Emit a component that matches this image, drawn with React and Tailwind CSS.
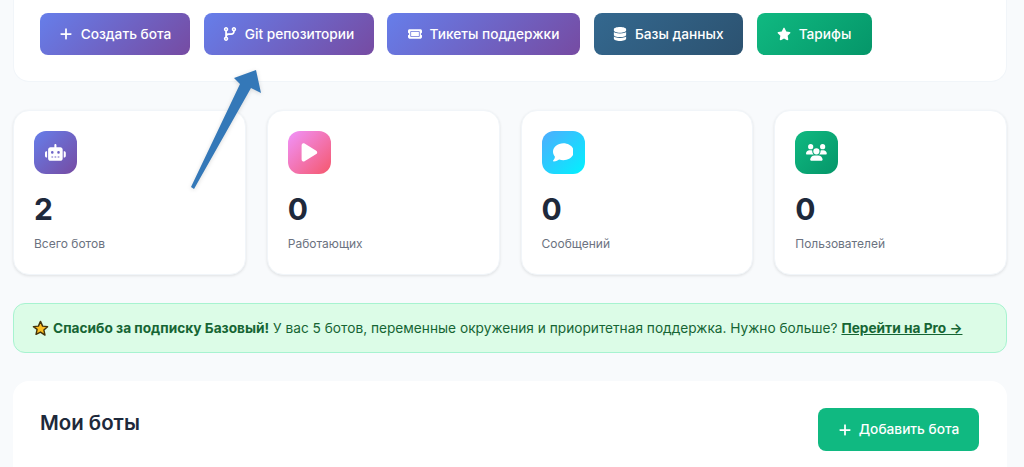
import { FaPlus, FaCodeBranch, FaTicket, FaDatabase, FaStar, FaRobot, FaPlay, FaComment, FaUsers } from "react-icons/fa6";

const purple = "bg-[linear-gradient(135deg,#667eea_0%,#764ba2_100%)]";
const green = "bg-[linear-gradient(135deg,#10b981_0%,#059669_100%)]";

const actions = [
  { label: "Создать бота", icon: FaPlus, bg: purple, w: "w-[150px]" },
  { label: "Git репозитории", icon: FaCodeBranch, bg: purple, w: "w-[170px]" },
  { label: "Тикеты поддержки", icon: FaTicket, bg: purple, w: "w-[193px]" },
  { label: "Базы данных", icon: FaDatabase, bg: "bg-[linear-gradient(135deg,#34688f_0%,#2c5270_100%)]", w: "w-[149.5px]" },
  { label: "Тарифы", icon: FaStar, bg: green, w: "w-[115px]" },
];

const stats = [
  { value: "2", label: "Всего ботов", icon: FaRobot, bg: purple },
  { value: "0", label: "Работающих", icon: FaPlay, bg: "bg-[linear-gradient(135deg,#f093fb_0%,#f5576c_100%)]" },
  { value: "0", label: "Сообщений", icon: FaComment, bg: "bg-[linear-gradient(135deg,#4facfe_0%,#00f2fe_100%)]" },
  { value: "0", label: "Пользователей", icon: FaUsers, bg: green },
];

export default function App() {
  return (
    <div className="relative h-[467px] overflow-hidden bg-[#f8fafc] pr-[17px] pl-[13px] font-['Inter',sans-serif]">
      <section className="rounded-b-2xl border border-t-0 border-[#f1f5f9] bg-white pt-[13px] pb-[26px] pl-[26px]">
        <div className="flex gap-[13.5px]">
          {actions.map((a) => (
            <button key={a.label} className={`flex h-[42px] items-center justify-center gap-[8px] rounded-lg text-[13.7px] font-medium text-white ${a.w} ${a.bg}`}>
              <a.icon className="h-[14px] w-auto" />
              {a.label}
            </button>
          ))}
        </div>
      </section>

      <section className="mt-[28px] grid grid-cols-4 gap-[21px]">
        {stats.map((s) => (
          <div key={s.label} className="h-[165px] rounded-2xl border border-[#f1f5f9] bg-white pt-[20px] pl-[20px] shadow-[0_1px_3px_rgba(0,0,0,0.1)]">
            <div className={`flex h-[43px] w-[43px] items-center justify-center rounded-xl text-white ${s.bg}`}>
              <s.icon className="h-[20.8px] w-auto" />
            </div>
            <div className="mt-[17px] text-[30px] leading-[36px] font-bold text-[#1e293b]">{s.value}</div>
            <div className="mt-[9px] text-xs leading-[16px] text-[#6b7280]">{s.label}</div>
          </div>
        ))}
      </section>

      <div className="mt-[28px] flex h-[50px] items-center gap-[4px] rounded-xl border border-[#a7f3d0] bg-[#dcfce7] pl-[18px] text-[13.7px] text-[#166534]">
        <svg width="17" height="17" viewBox="0 0 24 24">
          <path d="M12 2l3 6.6 7 .8-5.2 4.8 1.5 7.1L12 17l-6.3 3.3 1.5-7.1L2 9.4l7-.8z" fill="#fbbf24" stroke="#44330a" strokeWidth="2" strokeLinejoin="round" />
        </svg>
        <p>
          <strong className="font-bold">Спасибо за подписку Базовый!</strong> У вас 5 ботов, переменные окружения и приоритетная поддержка. Нужно больше?{" "}
          <a className="font-bold underline">Перейти на Pro →</a>
        </p>
      </div>

      <section className="mt-[28px] flex h-[120px] items-start justify-between rounded-t-2xl bg-white pt-[27px] pr-[28px] pl-[27px]">
        <h2 className="mt-[1px] text-[20.4px] leading-[28px] font-semibold text-[#1e293b]">Мои боты</h2>
        <button className="flex h-[43px] w-[161px] items-center justify-center gap-[7px] rounded-lg bg-[#10b981] text-[13.7px] font-medium text-white">
          <FaPlus className="h-[14px] w-auto" />
          Добавить бота
        </button>
      </section>

      {/* annotation arrow over the page */}
      <svg className="absolute top-0 left-0 h-[467px] w-[1024px] drop-shadow-sm" viewBox="0 0 1024 467" fill="none">
        <path d="M191 187L240 84L234 78L256 70L261 93L251 88L194 189Z" fill="#3478b8" />
      </svg>
    </div>
  );
}
